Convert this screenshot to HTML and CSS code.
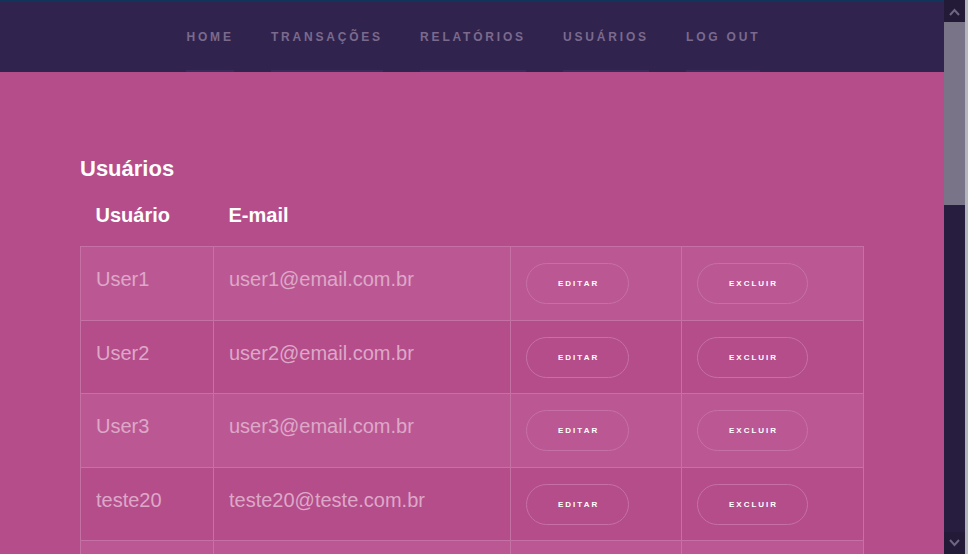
FILE: index.html
```html
<!DOCTYPE html>
<html lang="pt-BR">
<head>
<meta charset="utf-8">
<title>Usuários</title>
<link rel="stylesheet" href="styles.css">
</head>
<body>
<div class="window">
  <div class="viewport">
    <header class="topbar">
      <nav class="menu">
        <a class="menu-link" href="#">HOME</a>
        <a class="menu-link" href="#">TRANSAÇÕES</a>
        <a class="menu-link" href="#">RELATÓRIOS</a>
        <a class="menu-link" href="#">USUÁRIOS</a>
        <a class="menu-link" href="#">LOG OUT</a>
      </nav>
    </header>
    <main class="content">
      <h2 class="title">Usuários</h2>
      <table class="users">
        <colgroup>
          <col class="c-user"><col class="c-mail"><col class="c-edit"><col class="c-del">
        </colgroup>
        <thead>
          <tr><th>Usuário</th><th>E-mail</th><th></th><th></th></tr>
        </thead>
        <tbody>
          <tr><td>User1</td><td>user1@email.com.br</td><td><button class="pill">EDITAR</button></td><td><button class="pill">EXCLUIR</button></td></tr>
          <tr><td>User2</td><td>user2@email.com.br</td><td><button class="pill">EDITAR</button></td><td><button class="pill">EXCLUIR</button></td></tr>
          <tr><td>User3</td><td>user3@email.com.br</td><td><button class="pill">EDITAR</button></td><td><button class="pill">EXCLUIR</button></td></tr>
          <tr><td>teste20</td><td>teste20@teste.com.br</td><td><button class="pill">EDITAR</button></td><td><button class="pill">EXCLUIR</button></td></tr>
          <tr class="empty-row"><td></td><td></td><td></td><td></td></tr>
        </tbody>
      </table>
    </main>
  </div>
  <div class="scrollbar" aria-hidden="true">
    <div class="sb-btn">
      <svg width="21" height="22" viewBox="0 0 21 22"><path d="M6 15 L10.5 10 L15 15" fill="none" stroke="#6d6683" stroke-width="2"/></svg>
    </div>
    <div class="sb-track"><div class="sb-thumb"></div></div>
    <div class="sb-btn">
      <svg width="21" height="22" viewBox="0 0 21 22"><path d="M6 8 L10.5 13 L15 8" fill="none" stroke="#6d6683" stroke-width="2"/></svg>
    </div>
  </div>
</div>
</body>
</html>
```
FILE: styles.css
```css
html, body {
  margin: 0;
  height: 100%;
  overflow: hidden;
}
body {
  font-family: "Liberation Sans", Arial, sans-serif;
  color: #fff;
  background: #b54d8b;
}
.window {
  display: flex;
  height: 100%;
}
.viewport {
  flex: 1;
  min-width: 0;
  overflow: hidden;
  background: #b54d8b;
}

/* fake scrollbar */
.scrollbar {
  width: 21px;
  border-right: 3px solid #b3b6bd;
  display: flex;
  flex-direction: column;
  background: #261d3f;
}
.sb-btn {
  height: 22px;
  background: #221a37;
  display: flex;
}
.sb-track {
  flex: 1;
  background: #261d3f;
}
.sb-thumb {
  height: 183px;
  background: #7a7489;
}

/* header */
.topbar {
  background: #30244f;
  border-top: 2px solid #10355a;
  height: 70px;
  display: flex;
  justify-content: center;
}
.menu {
  display: flex;
  gap: 40px;
  height: 100%;
}
.menu-link {
  display: block;
  padding-top: 28px;
  box-sizing: border-box;
  height: 100%;
  border-bottom: 2px solid #392a5a;
  color: #7b6a8d;
  text-decoration: none;
  font-size: 12px;
  font-weight: 700;
  letter-spacing: 2.8px;
  margin-right: -2.8px;
  line-height: 14px;
}

/* content */
.content {
  padding: 84px 80px 0;
}
.title {
  margin: 0 0 6px;
  font-size: 22px;
  line-height: 25px;
  font-weight: 700;
}

.users {
  width: 100%;
  border-collapse: collapse;
}
.c-user { width: 133px; }
.c-mail { width: 297px; }
.c-edit { width: 171px; }
.c-del { width: 182px; }

.users th {
  text-align: left;
  font-size: 20px;
  line-height: 23px;
  font-weight: 700;
  padding: 17px 15px 19px;
}
.users td {
  border: 1px solid #c571a5;
  padding: 16px 15px 15.5px;
  font-size: 20px;
  line-height: 23px;
  color: #dda8c8;
  vertical-align: baseline;
}
.users tbody tr:nth-child(odd) td {
  background: #bb5894;
}
.users .empty-row td {
  height: 41px;
}
.pill {
  font-family: "Liberation Sans", Arial, sans-serif;
  font-size: 8px;
  font-weight: 700;
  letter-spacing: 2px;
  line-height: 9px;
  color: #fff;
  background: transparent;
  border: 1px solid #c670a7;
  border-radius: 21px;
  padding: 15px 29px 15px 31px;
  cursor: pointer;
}
```
